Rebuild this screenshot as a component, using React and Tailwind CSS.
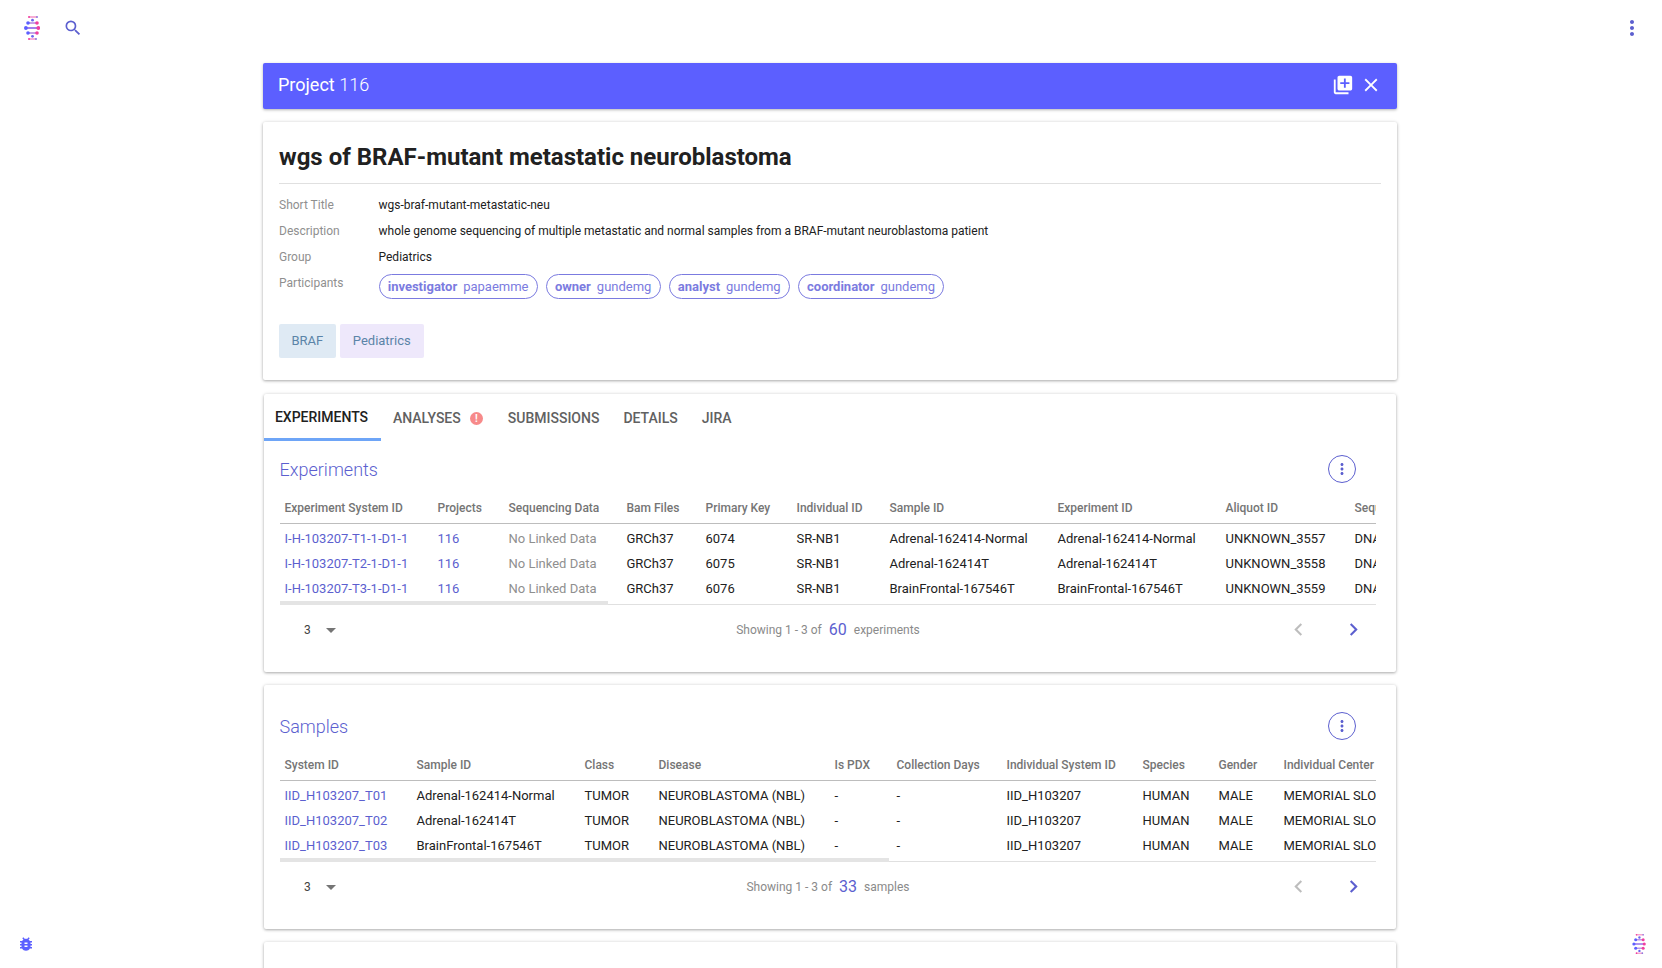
import { MdSearch, MdMoreVert, MdLibraryAdd, MdClose, MdChevronLeft, MdChevronRight, MdBugReport, MdArrowDropDown } from "react-icons/md";

const expCols = [
  ["Experiment System ID", 153],
  ["Projects", 71],
  ["Sequencing Data", 118],
  ["Bam Files", 79],
  ["Primary Key", 91],
  ["Individual ID", 93],
  ["Sample ID", 168],
  ["Experiment ID", 168],
  ["Aliquot ID", 129],
  ["Sequencing", 100],
];

const expRows = [
  ["I-H-103207-T1-1-D1-1", "116", "No Linked Data", "GRCh37", "6074", "SR-NB1", "Adrenal-162414-Normal", "Adrenal-162414-Normal", "UNKNOWN_3557", "DNA"],
  ["I-H-103207-T2-1-D1-1", "116", "No Linked Data", "GRCh37", "6075", "SR-NB1", "Adrenal-162414T", "Adrenal-162414T", "UNKNOWN_3558", "DNA"],
  ["I-H-103207-T3-1-D1-1", "116", "No Linked Data", "GRCh37", "6076", "SR-NB1", "BrainFrontal-167546T", "BrainFrontal-167546T", "UNKNOWN_3559", "DNA"],
];

const sampleCols = [
  ["System ID", 132],
  ["Sample ID", 168],
  ["Class", 74],
  ["Disease", 176],
  ["Is PDX", 62],
  ["Collection Days", 110],
  ["Individual System ID", 136],
  ["Species", 76],
  ["Gender", 65],
  ["Individual Center", 160],
];

const sampleRows = [
  ["IID_H103207_T01", "Adrenal-162414-Normal", "TUMOR", "NEUROBLASTOMA (NBL)", "-", "-", "IID_H103207", "HUMAN", "MALE", "MEMORIAL SLOAN"],
  ["IID_H103207_T02", "Adrenal-162414T", "TUMOR", "NEUROBLASTOMA (NBL)", "-", "-", "IID_H103207", "HUMAN", "MALE", "MEMORIAL SLOAN"],
  ["IID_H103207_T03", "BrainFrontal-167546T", "TUMOR", "NEUROBLASTOMA (NBL)", "-", "-", "IID_H103207", "HUMAN", "MALE", "MEMORIAL SLOAN"],
];

const participants = [
  ["investigator", "papaemme"],
  ["owner", "gundemg"],
  ["analyst", "gundemg"],
  ["coordinator", "gundemg"],
];

function DnaLogo({ className }) {
  return (
    <svg viewBox="0 0 16 24" className={className}>
      <rect x="5" y="0.4" width="8" height="1.2" fill="#f47ab8" />
      <circle cx="5" cy="1" r="1" fill="#f03fa0" />
      <circle cx="13" cy="1" r="1" fill="#8f7be0" />
      <circle cx="8.5" cy="4.2" r="1.4" fill="#6a64f0" />
      <rect x="4" y="6.4" width="9" height="1.2" fill="#a066d8" />
      <circle cx="4" cy="7" r="1.8" fill="#5c5fff" />
      <circle cx="13" cy="7" r="1.8" fill="#f03fa0" />
      <rect x="2" y="11.2" width="12.5" height="1.6" fill="#8a5fe8" />
      <circle cx="1.9" cy="12" r="1.9" fill="#5c5fff" />
      <circle cx="14.3" cy="12" r="1.9" fill="#f03fa0" />
      <rect x="4" y="16.4" width="9" height="1.2" fill="#a066d8" />
      <circle cx="4" cy="17" r="1.8" fill="#5c5fff" />
      <circle cx="13" cy="17" r="1.8" fill="#f03fa0" />
      <circle cx="8.5" cy="20.3" r="1.4" fill="#6a64f0" />
      <rect x="5" y="22.4" width="7" height="1.2" fill="#f47ab8" />
      <circle cx="5" cy="23" r="1" fill="#f03fa0" />
      <circle cx="12" cy="23" r="1" fill="#8f7be0" />
    </svg>
  );
}

function InfoRow({ label, children }) {
  return (
    <div className="flex h-[26px] items-center text-[12px] leading-none">
      <span className="w-[99.5px] text-[#8f8f8f]">{label}</span>
      <span className="text-[#212121]">{children}</span>
    </div>
  );
}

function DataTable({ cols, rows, thumb, muted, links }) {
  return (
    <div className="relative overflow-hidden">
      <table className="table-fixed border-collapse" style={{ width: cols.reduce((a, c) => a + c[1], 0) }}>
        <colgroup>
          {cols.map((c) => <col key={c[0]} style={{ width: c[1] }} />)}
        </colgroup>
        <thead>
          <tr className="h-[30px] border-b border-[#bdbdbd]">
            {cols.map((c) => (
              <th key={c[0]} className="truncate pl-[4.5px] pt-[1px] text-left text-[12px] font-medium text-[#757575]">{c[0]}</th>
            ))}
          </tr>
        </thead>
        <tbody>
          {rows.map((r, i) => (
            <tr key={i} className={i === 0 ? "h-[28px] [&>td]:pt-[3px]" : "h-[25px]"}>
              {r.map((v, j) => (
                <td
                  key={j}
                  className={
                    "overflow-hidden whitespace-nowrap pl-[4.5px] text-[13px] " +
                    (links.includes(j) ? "text-[#5c5fcf]" : muted === j ? "text-[#8f8f8f]" : "text-[#212121]")
                  }
                >
                  {v}
                </td>
              ))}
            </tr>
          ))}
        </tbody>
      </table>
      <div className="mt-[3px] h-px bg-[#e0e0e0]" />
      <div className="absolute bottom-0 left-0 h-[4px] bg-[#e4e4e4]" style={{ width: thumb }} />
    </div>
  );
}

function Pagination({ total, noun }) {
  return (
    <div className="relative mt-[8px] flex h-[34px] items-center justify-center">
      <div className="absolute left-[24px] top-0 flex h-full items-center text-[12px] text-[#424242]">
        <span>3</span>
        <MdArrowDropDown className="ml-[8px] text-[24px] text-[#757575]" />
      </div>
      <div className="flex items-center text-[12px] text-[#8a8a8a]">
        <span>Showing 1 - 3 of</span>
        <span className="mx-[7px] text-[16px] text-[#5c5fcf]">{total}</span>
        <span>{noun}</span>
      </div>
      <div className="absolute right-[8px] -top-[1px] flex h-full items-center gap-[30px] pr-[2px] text-[25px]">
        <MdChevronLeft className="text-[#bdbdbd]" />
        <MdChevronRight className="text-[#5c5fcf]" />
      </div>
    </div>
  );
}

function SectionHead({ title }) {
  return (
    <div className="flex items-center justify-between pr-[20px]">
      <h2 className="text-[18px] font-light text-[#5c5fcf]">{title}</h2>
      <button className="flex h-[28px] w-[28px] items-center justify-center rounded-full border border-[#5c5fcf] text-[18px] text-[#5c5fcf]">
        <MdMoreVert />
      </button>
    </div>
  );
}

const cardCls = "rounded-[2px] bg-white shadow-[0_1px_3px_rgba(0,0,0,0.3),0_0_4px_rgba(0,0,0,0.08)]";

export default function App() {
  return (
    <div className="relative h-[968px] w-full overflow-hidden bg-white font-['Roboto',sans-serif]">
      <header className="flex h-[63px] items-start justify-between pl-[24px] pr-[18px] pt-[16px]">
        <div className="flex h-[24px] items-center gap-[23px]">
          <DnaLogo className="h-[24px] w-[16px]" />
          <MdSearch className="text-[20px] text-[#5c5fcf]" />
        </div>
        <MdMoreVert className="text-[24px] text-[#5c5fcf]" />
      </header>

      <main className="ml-[263px] flex w-[1134px] flex-col">
        <div className="flex h-[46px] items-center justify-between rounded-[2px] bg-[#5c5fff] pl-[15px] pr-[15px] text-white shadow-[0_1px_3px_rgba(0,0,0,0.3)]">
          <div className="-mt-[3px] text-[18px]">Project <span className="font-light">116</span></div>
          <div className="-mt-[2px] flex items-center gap-[6px]">
            <MdLibraryAdd className="text-[22px]" />
            <MdClose className="text-[22px]" />
          </div>
        </div>

        <section className={"mt-[13px] h-[258px] px-[16px] pt-[18px] " + cardCls}>
          <h1 className="border-b border-[#e0e0e0] pb-[8px] text-[24px] font-bold leading-[35px] text-[#212121]">
            wgs of BRAF-mutant metastatic neuroblastoma
          </h1>
          <div className="mt-[8px]">
            <InfoRow label="Short Title">wgs-braf-mutant-metastatic-neu</InfoRow>
            <InfoRow label="Description">whole genome sequencing of multiple metastatic and normal samples from a BRAF-mutant neuroblastoma patient</InfoRow>
            <InfoRow label="Group">Pediatrics</InfoRow>
            <div className="flex items-start text-[12px]">
              <span className="w-[99.5px] pt-[4px] text-[#8f8f8f]">Participants</span>
              <div className="mt-[4px] flex gap-[8px] text-[13px]">
                {participants.map(([role, user]) => (
                  <span key={role} className="flex h-[25px] items-center gap-[6px] rounded-full border border-[#7b7be0] px-[8.2px] text-[#7b7be0]">
                    <b className="font-bold">{role}</b>
                    <span>{user}</span>
                  </span>
                ))}
              </div>
            </div>
          </div>
          <div className="mt-[25px] flex gap-[4px] text-[13px] text-[#5b84a8]">
            <span className="flex h-[34px] items-center rounded-[2px] bg-[#dfeaf4] px-[12.5px]">BRAF</span>
            <span className="flex h-[34px] items-center rounded-[2px] bg-[#eee8fb] px-[13px]">Pediatrics</span>
          </div>
        </section>

        <section className={"mx-[1px] mt-[14px] h-[278px] pl-[16px] pr-[20px] " + cardCls}>
          <nav className="-ml-[16px] flex h-[47px] items-center text-[14px] font-medium text-[#616161]">
            <span className="flex h-full w-[117px] items-center justify-center border-b-[3px] border-[#6ea5f7] pr-[2px] pt-[3px] text-[#212121]">EXPERIMENTS</span>
            <span className="ml-[12px] flex items-center pt-[2px]">ANALYSES
              <span className="ml-[9px] flex h-[13px] w-[13px] items-center justify-center rounded-full bg-[#f78a8a] text-[10px] font-bold text-white">!</span>
            </span>
            <span className="ml-[25px] pt-[2px]">SUBMISSIONS</span>
            <span className="ml-[24px] pt-[2px]">DETAILS</span>
            <span className="ml-[24px] pt-[2px]">JIRA</span>
          </nav>
          <div className="-ml-[0.5px] mt-[14px]"><SectionHead title="Experiments" /></div>
          <div className="mt-[10px]">
            <DataTable cols={expCols} rows={expRows} thumb={328} muted={2} links={[0, 1]} />
          </div>
          <Pagination total="60" noun="experiments" />
        </section>

        <section className={"mx-[1px] mt-[13px] h-[244px] pl-[16px] pr-[20px] pt-[27px] " + cardCls}>
          <div className="-ml-[0.5px]"><SectionHead title="Samples" /></div>
          <div className="mt-[10px]">
            <DataTable cols={sampleCols} rows={sampleRows} thumb={609} links={[0]} />
          </div>
          <Pagination total="33" noun="samples" />
        </section>

        <section className={"mx-[1px] mt-[13px] h-[60px] " + cardCls} />
      </main>

      <MdBugReport className="fixed bottom-[15px] left-[17px] text-[18px] text-[#5c5fff]" />
      <DnaLogo className="fixed bottom-[14px] right-[16px] h-[20px] w-[14px]" />
    </div>
  );
}
